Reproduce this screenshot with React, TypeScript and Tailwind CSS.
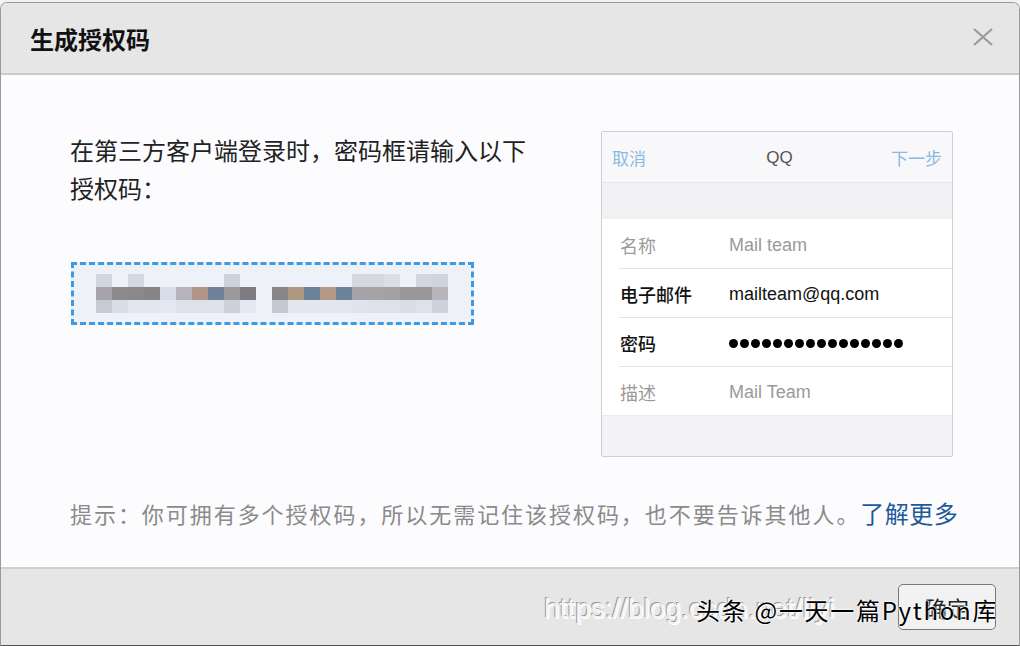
import React from 'react';

const cjk = "font-['Noto_Sans_CJK_SC',sans-serif]";

// masked authorization code, drawn as coarse blocks
const codeRows: string[][][] = [
    [
        ['#d2d6de', '', '#d4d8e0', '', '', '', '', '', '#cdd2da', ''],
        ['', '', '', '', '', '#d6d8e0', '#d6d8e0', '#dcdee4', '', '#d2d6de', '#d0d4dc'],
    ],
    [
        ['#a4a4aa', '#8c8a8c', '#8a8888', '#858587', '#d6dde8', '#b4b4ba', '#b09488', '#6f8297', '#9a9a9c', '#7e7c80'],
        ['#868688', '#ae9882', '#6d8199', '#b29a86', '#6e8299', '#a6a2a8', '#a6a2a6', '#a4a0a4', '#9a969a', '#9a969a', '#b6b6ba'],
    ],
    [
        ['#c6cad2', '#d8dee8', '#e2e6ee', '#e2e6ee', '#e4e8f0', '#dde2ea', '#dde2ea', '#dde2ea', '#ccd0d8', '#e4e8f0'],
        ['#c4c8d0', '#e2e6ee', '#e2e6ee', '#e2e6ee', '#e2e6ee', '#dfe3eb', '#dde1ea', '#dde1ea', '#d8dce4', '#dde1ea', '#cdd1d9'],
    ],
];

const CodeBlocks: React.FC = () => (
    <div className="flex flex-col">
        {codeRows.map((row, r) => (
            <div key={r} className="flex gap-4 h-[13px]">
                {row.map((group, g) => (
                    <div key={g} className="flex">
                        {group.map((c, i) => (
                            <div key={i} className="w-4 h-full" style={{ backgroundColor: c || 'transparent' }} />
                        ))}
                    </div>
                ))}
            </div>
        ))}
    </div>
);

interface Field {
    label: string;
    value: string;
    strong: boolean;
}

const fields: Field[] = [
    { label: '名称', value: 'Mail team', strong: false },
    { label: '电子邮件', value: 'mailteam@qq.com', strong: true },
    { label: '密码', value: '', strong: true },
    { label: '描述', value: 'Mail Team', strong: false },
];

const PhoneForm: React.FC = () => (
    <div className="w-[352px] h-[326px] border border-[#cfcfcf] rounded-[2px] bg-[#f4f4f6] flex flex-col overflow-hidden">
        <div className="h-[51px] shrink-0 flex items-center justify-between px-[10px] pt-[2px] bg-[#f8f8fa] border-b border-[#e6e6e8] text-[17px]">
            <span className={`${cjk} text-[#8cb9df]`}>取消</span>
            <span className="font-['Liberation_Sans',sans-serif] text-[#555] pl-[22px]">QQ</span>
            <span className={`${cjk} text-[#8cb9df]`}>下一步</span>
        </div>
        <div className="h-[36px] shrink-0 bg-[#f1f1f3]" />
        <div className="bg-white shrink-0">
            <div className="ml-[17px]">
                {fields.map((f, i) => (
                    <div
                        key={f.label}
                        className={`h-[49px] flex items-center pt-[3px] ${i > 0 ? 'border-t border-[#e4e4e6]' : ''}`}
                    >
                        <span
                            className={`${cjk} w-[110px] pl-px text-[18px] ${f.strong ? 'text-[#111] font-medium' : 'text-[#9a9a9a]'}`}
                        >
                            {f.label}
                        </span>
                        {f.label === '密码' ? (
                            <div className="flex gap-[2px]">
                                {Array.from({ length: 16 }).map((_, d) => (
                                    <div key={d} className="w-[9px] h-[9px] rounded-full bg-black" />
                                ))}
                            </div>
                        ) : (
                            <span
                                className={`font-['Liberation_Sans',sans-serif] text-[18px] ${f.strong ? 'text-[#111]' : 'text-[#9a9a9a]'}`}
                            >
                                {f.value}
                            </span>
                        )}
                    </div>
                ))}
            </div>
        </div>
        <div className="flex-1 bg-[#f4f4f6] border-t border-[#ececee]" />
    </div>
);

const App: React.FC = () => {
    return (
        <div className="w-[1020px] h-[646px] bg-[#f3f3f3] pt-[2px] overflow-hidden relative">
            <div className="h-[644px] flex flex-col rounded-t-[7px] border border-[#9a9a9a] border-b-[#555] bg-white overflow-hidden">
                {/* header */}
                <div className="h-[72px] shrink-0 flex items-center justify-between pl-[29px] pr-[26px] bg-[#e7e6e7] border-b-2 border-[#cbcbcb]">
                    <h1 className={`${cjk} text-[24px] font-bold text-[#111] pt-[1px]`}>生成授权码</h1>
                    <svg width="20" height="18" viewBox="0 0 20 18" className="mb-[2px]">
                        <path d="M1 1 L19 17 M19 1 L1 17" stroke="#9b9b9b" strokeWidth="2.2" />
                    </svg>
                </div>

                {/* body */}
                <div className="flex-1 bg-[#fcfcfe] pl-[69px] pt-[56px] flex flex-col">
                    <div className="flex">
                        <div className="w-[531px] shrink-0">
                            <p className={`${cjk} text-[24px] leading-[38px] text-[#222] w-[470px]`}>
                                在第三方客户端登录时，密码框请输入以下授权码：
                            </p>
                            <div className="mt-[55px] ml-px w-[403px] h-[63px] border-[3px] border-dashed border-[#3d9be3] bg-[#eef1f7] flex items-center pl-[22px]">
                                <CodeBlocks />
                            </div>
                        </div>
                        <PhoneForm />
                    </div>
                    <p className={`${cjk} mt-[40px] text-[22px] leading-[32px] tracking-[1.95px] text-[#8a8a8a]`}>
                        提示：你可拥有多个授权码，所以无需记住该授权码，也不要告诉其他人。
                        <a className="text-[#1d5a9a] tracking-[0.5px] text-[24px]">了解更多</a>
                    </p>
                </div>

                {/* footer */}
                <div className="h-[78px] shrink-0 bg-[#e7e6e7] border-t-2 border-[#cfcfcf] flex items-start justify-end pt-[15px] pr-[23px]">
                    <button
                        className={`${cjk} w-[98px] h-[46px] rounded-[5px] border border-[#777] bg-[#f2f2f2] text-[22px] text-[#222]`}
                    >
                        确定
                    </button>
                </div>
            </div>

            {/* watermarks */}
            <div className="absolute left-[544px] top-[588px] font-['Liberation_Sans',sans-serif] text-[28px] text-[#f4f4f4] [text-shadow:-1px_-1px_0_#9a9a9a,1px_1px_0_#fff] whitespace-nowrap">
                https://blog.csdn.net/liyi
            </div>
            <div className={`absolute left-[696px] top-[594px] ${cjk} text-[24px] leading-[32px] tracking-[1.7px] text-black [text-shadow:0_0_2px_#fff,0_0_2px_#fff,0_0_2px_#fff] whitespace-nowrap`}>
                头条 @一天一篇Python库
            </div>
        </div>
    );
};

export default App;
